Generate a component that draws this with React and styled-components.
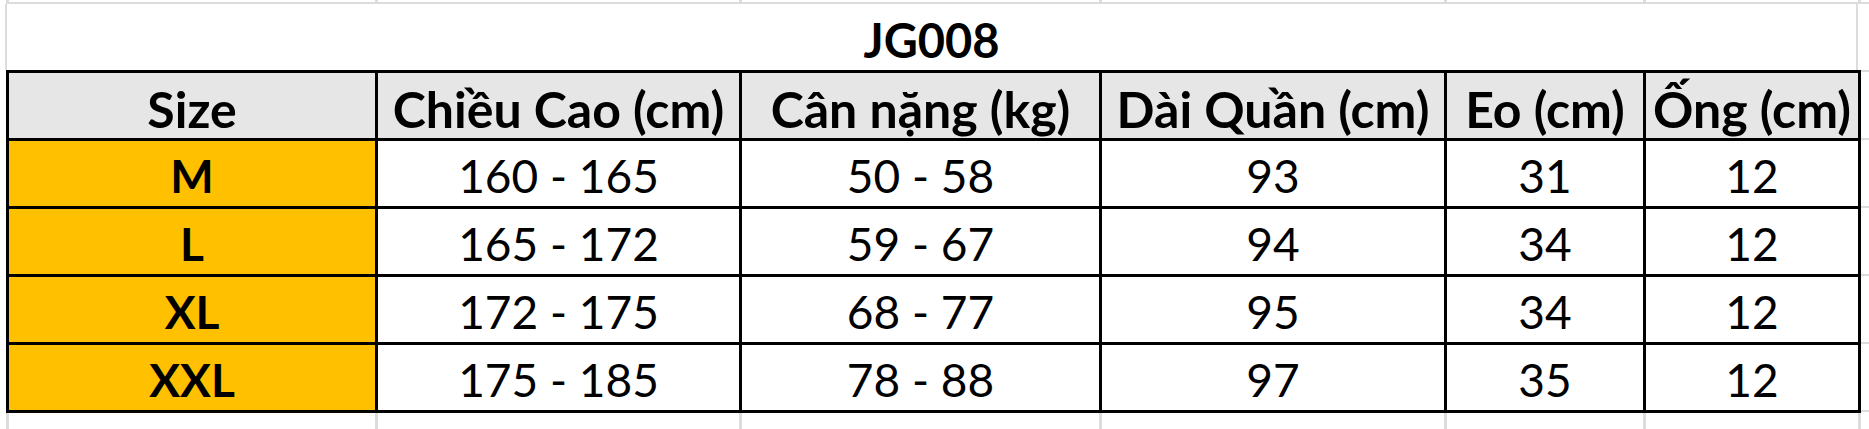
import React from "react";
import styled, { createGlobalStyle } from "styled-components";

const COLS = [366, 361, 357, 342, 196, 212];
const template = COLS.map((w) => `${w}px`).join(" ");

const GRID = "#dcdcdc";

const GlobalStyle = createGlobalStyle`
  html, body {
    margin: 0;
    padding: 0;
    background: #fff;
  }
  body {
    font-family: Lato, "Open Sans", "Noto Sans", sans-serif;
    color: #000;
  }
`;

const Sheet = styled.div`
  width: 1869px;
  height: 429px;
  overflow: hidden;
  display: flex;
`;

const Main = styled.div`
  display: flex;
  flex-direction: column;
  padding-left: 6px;
`;

const Margin = styled.div`
  flex: 1;
  display: flex;
  flex-direction: column;
`;

const MarginCell = styled.div`
  height: ${(p) => p.$h}px;
  border-bottom: 2px solid ${GRID};
  flex-shrink: 0;
`;

const Strip = styled.div`
  display: grid;
  grid-template-columns: ${template};
  column-gap: 3px;
  padding: 0 3px;
  height: ${(p) => p.$h}px;
  background: ${GRID};
  border-bottom: ${(p) => (p.$line ? `2px solid ${GRID}` : "none")};
  flex-shrink: 0;
`;

const StripCell = styled.div`
  background: #fff;
`;

const Title = styled.div`
  margin-left: -1px;
  width: 1853px;
  height: 66px;
  border-left: 2px solid ${GRID};
  border-right: 2px solid ${GRID};
  display: flex;
  align-items: center;
  justify-content: center;
  padding-top: 6px;
  box-sizing: border-box;
  font-size: 47px;
  font-weight: 700;
  line-height: 1;
`;

const Table = styled.div`
  display: grid;
  grid-template-columns: ${template};
  grid-auto-rows: 65px;
  gap: 3px;
  padding: 3px;
  background: #000;
  width: fit-content;
`;

const Cell = styled.div`
  display: flex;
  align-items: center;
  justify-content: center;
  white-space: nowrap;
  line-height: 1;
  box-sizing: border-box;
  background: ${(p) => (p.$head ? "#e7e6e6" : p.$size ? "#ffc000" : "#fff")};
  font-size: ${(p) => (p.$head ? 50 : 46)}px;
  font-weight: ${(p) => (p.$head || p.$size ? 700 : 400)};
  padding-top: ${(p) => (p.$head ? 6 : 5)}px;
`;

const headers = [
  "Size",
  "Chiều Cao (cm)",
  "Cân nặng (kg)",
  "Dài Quần (cm)",
  "Eo (cm)",
  "Ống (cm)",
];

const rows = [
  ["M", "160 - 165", "50 - 58", "93", "31", "12"],
  ["L", "165 - 172", "59 - 67", "94", "34", "12"],
  ["XL", "172 - 175", "68 - 77", "95", "34", "12"],
  ["XXL", "175 - 185", "78 - 88", "97", "35", "12"],
];

function GridStrip({ h, line }) {
  return (
    <Strip $h={h} $line={line}>
      {COLS.map((w, i) => (
        <StripCell key={i} />
      ))}
    </Strip>
  );
}

export default function App() {
  return (
    <>
      <GlobalStyle />
      <Sheet>
        <Main>
          <GridStrip h={2} line />
          <Title>JG008</Title>
          <Table>
            {headers.map((h) => (
              <Cell key={h} $head>
                {h}
              </Cell>
            ))}
            {rows.map((row) =>
              row.map((v, i) => (
                <Cell key={row[0] + i} $size={i === 0}>
                  {v}
                </Cell>
              ))
            )}
          </Table>
          <GridStrip h={16} />
        </Main>
        <Margin>
          <MarginCell $h={2} />
          {[66, 66, 66, 66, 66, 66].map((h, i) => (
            <MarginCell key={i} $h={h} />
          ))}
        </Margin>
      </Sheet>
    </>
  );
}
